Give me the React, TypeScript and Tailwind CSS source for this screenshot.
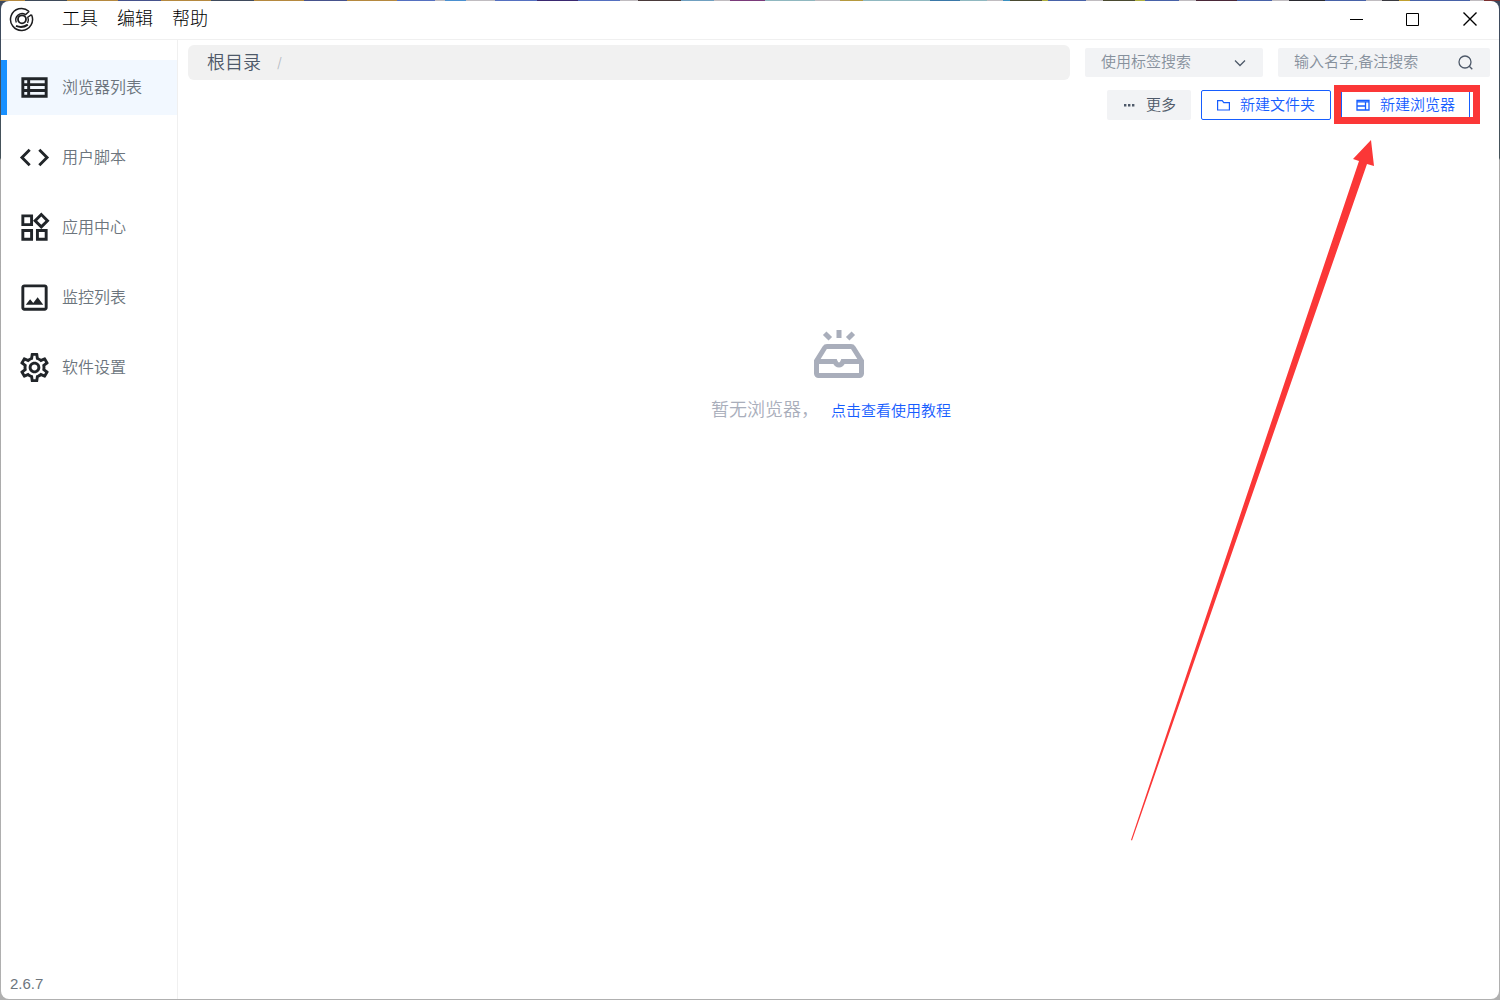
import React from "react";

type NavItem = { label: string; path: string };

const navItems: NavItem[] = [
  {
    label: "浏览器列表",
    path: "M3 5v14h18V5H3zm4 2v2H5V7h2zm-2 6v-2h2v2H5zm0 2h2v2H5v-2zm14 2H9v-2h10v2zm0-4H9v-2h10v2zm0-4H9V7h10v2z",
  },
  {
    label: "用户脚本",
    path: "M9.4 16.6L4.8 12l4.6-4.6L8 6l-6 6 6 6 1.4-1.4zm5.2 0l4.6-4.6-4.6-4.6L16 6l6 6-6 6-1.4-1.4z",
  },
  {
    label: "应用中心",
    path: "M16.66 4.52l2.83 2.83-2.83 2.83-2.83-2.83 2.83-2.83M9 5v4H5V5h4m10 10v4h-4v-4h4M9 15v4H5v-4h4m7.66-13.31L11 7.34 16.66 13l5.66-5.66-5.66-5.65zM11 3H3v8h8V3zm10 10h-8v8h8v-8zm-10 0H3v8h8v-8z",
  },
  {
    label: "监控列表",
    path: "M19 5v14H5V5h14m0-2H5c-1.1 0-2 .9-2 2v14c0 1.1.9 2 2 2h14c1.1 0 2-.9 2-2V5c0-1.1-.9-2-2-2zm-4.86 8.86l-3 3.87L9 13.14 6 17h12l-3.86-5.14z",
  },
  {
    label: "软件设置",
    path: "M19.43 12.98c.04-.32.07-.64.07-.98 0-.34-.03-.66-.07-.98l2.11-1.65c.19-.15.24-.42.12-.64l-2-3.46a.5.5 0 00-.61-.22l-2.49 1c-.52-.4-1.08-.73-1.69-.98l-.38-2.65A.488.488 0 0014 2h-4c-.25 0-.46.18-.49.42l-.38 2.65c-.61.25-1.17.59-1.69.98l-2.49-1a.566.566 0 00-.18-.03c-.17 0-.34.09-.43.25l-2 3.46c-.13.22-.07.49.12.64l2.11 1.65c-.04.32-.07.65-.07.98 0 .33.03.66.07.98l-2.11 1.65c-.19.15-.24.42-.12.64l2 3.46a.5.5 0 00.61.22l2.49-1c.52.4 1.08.73 1.69.98l.38 2.65c.03.24.24.42.49.42h4c.25 0 .46-.18.49-.42l.38-2.65c.61-.25 1.17-.59 1.69-.98l2.49 1c.06.02.12.03.18.03.17 0 .34-.09.43-.25l2-3.46c.12-.22.07-.49-.12-.64l-2.11-1.65zm-1.98-1.71c.04.31.05.52.05.73 0 .21-.02.43-.05.73l-.14 1.13.89.7 1.08.84-.7 1.21-1.27-.51-1.04-.42-.9.68c-.43.32-.84.56-1.25.73l-1.06.43-.16 1.13-.2 1.35h-1.4l-.19-1.35-.16-1.13-1.06-.43c-.43-.18-.83-.41-1.23-.71l-.91-.7-1.06.43-1.27.51-.7-1.21 1.08-.84.89-.7-.14-1.13c-.03-.31-.05-.54-.05-.74s.02-.43.05-.73l.14-1.13-.89-.7-1.08-.84.7-1.21 1.27.51 1.04.42.9-.68c.43-.32.84-.56 1.25-.73l1.06-.43.16-1.13.2-1.35h1.39l.19 1.35.16 1.13 1.06.43c.43.18.83.41 1.23.71l.91.7 1.06-.43 1.27-.51.7 1.21-1.07.85-.89.7.14 1.13zM12 8c-2.21 0-4 1.79-4 4s1.79 4 4 4 4-1.79 4-4-1.79-4-4-4zm0 6c-1.1 0-2-.9-2-2s.9-2 2-2 2 .9 2 2-.9 2-2 2z",
  },
];

// Desktop wallpaper showing above the window: [share of the width, colour]
const desktopStrip: [number, string][] = [
  [25, "#b5893f"], [42, "#3e4a5a"], [51, "#b5893f"], [43, "#46528c"], [50, "#b5893f"],
  [43, "#3f4a5c"], [50, "#b5893f"], [43, "#46528c"], [50, "#b5893f"], [38, "#5570c0"],
  [10, "#c0bcc0"], [21, "#4a90d0"], [29, "#c0bcc0"], [42, "#5570c0"], [41, "#3a2870"],
  [42, "#5570c0"], [18, "#c0bcc0"], [43, "#4a3a3a"], [33, "#70a0c0"], [16, "#c0bcc0"],
  [35, "#7a3a7a"], [50, "#90b8c0"], [25, "#c0bcc0"], [23, "#b5993f"], [67, "#90b8c0"],
  [30, "#3a78a8"], [27, "#90b8c0"], [16, "#c0bcc0"], [7, "#3a90c0"], [32, "#4a4a30"],
  [6, "#b0b040"], [38, "#4862a8"], [17, "#c0bcc0"], [32, "#4a4a30"], [10, "#b0b040"],
  [34, "#4862a8"], [17, "#c0bcc0"], [41, "#4a2838"], [35, "#4862a8"], [17, "#c0bcc0"],
  [36, "#2a2a30"], [41, "#4862a8"], [16, "#c0bcc0"], [17, "#3a3a40"], [11, "#c0a030"],
  [60, "#4862a8"], [14, "#c0bcc0"], [16, "#7a3030"],
];

function DesktopStrip() {
  return (
    <div className="flex h-px shrink-0">
      {desktopStrip.map(([share, color], i) => (
        <span key={i} className="basis-0" style={{ flexGrow: share, backgroundColor: color }} />
      ))}
    </div>
  );
}

function Logo() {
  return (
    <svg className="size-[25px]" viewBox="0 0 25 25" fill="none" stroke="#1d1d1f" strokeWidth="1.5" aria-hidden="true">
      <path d="M19.800 4.200A11 11 0 1 0 22.500 7.800" />
      <circle cx="13" cy="12.300" r="4" strokeWidth="1.800" />
      <path d="M20.300 4.200L16.600 7.600A6.400 6.400 0 0 0 7.300 15.500" strokeWidth="1.400" />
      <path d="M22.500 7.600L18.800 10.200A6.600 6.600 0 0 1 18.600 16" strokeWidth="1.400" />
      <path d="M7 18.900C11 20.500 15.500 20 18.800 17.600" strokeWidth="2" />
    </svg>
  );
}

function TitleBar() {
  return (
    <header className="flex h-[39px] shrink-0 items-center border-b border-[#f0f0f0] pb-0.5 pl-2">
      <Logo />
      <nav className="ml-7 flex gap-[19px]">
        {["工具", "编辑", "帮助"].map((t) => (
          <button key={t} type="button" className="text-lg leading-7 font-light text-black">
            {t}
          </button>
        ))}
      </nav>
      <div className="ml-auto flex items-center">
        <button type="button" aria-label="最小化" className="flex h-9 w-14 items-center justify-center">
          <svg width="13" height="13" aria-hidden="true"><path d="M0 6.500h13" stroke="#000" /></svg>
        </button>
        <button type="button" aria-label="最大化" className="flex h-9 w-14 items-center justify-center">
          <svg width="13" height="13" fill="none" aria-hidden="true"><path d="M.5.5h12v12H.5z" stroke="#000" /></svg>
        </button>
        <button type="button" aria-label="关闭" className="flex h-9 w-[59px] items-center justify-center">
          <svg width="14" height="14" aria-hidden="true"><path d="M.5.5l13 13M13.500.5l-13 13" stroke="#000" strokeWidth="1.400" /></svg>
        </button>
      </div>
    </header>
  );
}

function Sidebar() {
  return (
    <aside className="flex w-[177px] shrink-0 flex-col border-r border-[#f0f0f0] pt-5">
      <nav className="flex flex-col gap-[15px]">
        {navItems.map((item, i) => (
          <button
            key={item.label}
            type="button"
            className={
              "flex h-[55px] items-center gap-[10px] border-l-6 pl-[10px] text-base font-[350] text-[#6c757d] " +
              (i === 0 ? "border-[#1890ff] bg-[#f2f8ff]" : "border-transparent")
            }
          >
            <svg className="size-[35px]" viewBox="0 0 24 24" fill="#212529" aria-hidden="true">
              <path d={item.path} />
            </svg>
            <span className="pb-0.5">{item.label}</span>
          </button>
        ))}
      </nav>
      <p className="mt-auto pb-1 pl-[9px] font-['Liberation_Sans',sans-serif] text-[15px] leading-[22px] text-[#6c757d]">2.6.7</p>
    </aside>
  );
}

function Filters() {
  return (
    <div className="flex items-center gap-[15px]">
      <div className="flex h-[35px] min-w-0 flex-1 items-center gap-4 rounded-md bg-[#f1f1f1] pl-[19px] text-lg font-[350] text-[#4e5969]">
        <span>根目录</span>
        <span className="text-sm text-[#b4b9c2]">/</span>
      </div>
      <div className="relative w-[178px]">
        <select
          aria-label="使用标签搜索"
          className="h-[29px] w-full appearance-none rounded-xs bg-[#f2f3f5] px-4 text-[15px] font-[350] text-[#86909c]"
        >
          <option>使用标签搜索</option>
        </select>
        <svg className="pointer-events-none absolute top-[9px] right-[17px] size-3" viewBox="0 0 12 12" fill="none" stroke="#4e5969" strokeWidth="1.300" aria-hidden="true">
          <path d="M1 3.500l5 5 5-5" />
        </svg>
      </div>
      <label className="flex h-[29px] w-[212px] items-center rounded-xs bg-[#f2f3f5] pr-[17px] pl-4">
        <input
          type="text"
          aria-label="搜索"
          placeholder="输入名字,备注搜索"
          className="min-w-0 flex-1 bg-transparent text-[15px] font-[350] outline-none placeholder:text-[#86909c]"
        />
        <svg className="size-[15px]" viewBox="0 0 15 15" fill="none" stroke="#4e5969" strokeWidth="1.300" aria-hidden="true">
          <circle cx="7" cy="7" r="6" />
          <path d="M11.300 11.300l3 3" />
        </svg>
      </label>
    </div>
  );
}

function Annotation() {
  return (
    <>
      <span className="pointer-events-none absolute -top-[5px] -left-[7px] h-[39px] w-[146px] border-7 border-[#fb3737]" />
      <svg className="pointer-events-none absolute top-[50px] right-[95px] h-[701px] w-[244px]" viewBox="0 0 244 701" fill="#fb3737" aria-hidden="true">
        <path d="M240 0L243 26L236 24L1 700.500L0 700L228 21L222 19Z" />
      </svg>
    </>
  );
}

function Actions() {
  return (
    <div className="mt-[10px] flex justify-end gap-[10px] pr-5 text-[15px] font-[350]">
      <button type="button" className="flex h-[30px] w-[84px] items-center gap-[11px] rounded-xs bg-[#f2f3f5] pl-4 text-[#4e5969]">
        <svg width="12" height="12" fill="#4e5969" aria-hidden="true">
          <path d="M1 5h2.400v2.400H1zM5 5h2.400v2.400H5zM9 5h2.400v2.400H9z" />
        </svg>
        更多
      </button>
      <button type="button" className="flex h-[30px] w-[130px] items-center gap-[10px] rounded-xs border border-[#165dff] pl-[14px] text-[#165dff]">
        <svg width="14" height="14" viewBox="0 0 14 14" fill="none" stroke="currentColor" strokeWidth="1.200" aria-hidden="true">
          <path d="M1.600 2.600h4.600l1.600 2h5.600v7.400H1.600z" />
        </svg>
        新建文件夹
      </button>
      <div className="relative">
        <button type="button" className="flex h-[30px] w-[129px] items-center gap-[10px] rounded-xs border border-[#165dff] pl-[14px] text-[#165dff]">
          <svg width="14" height="14" viewBox="0 0 14 14" fill="none" stroke="currentColor" strokeWidth="1.300" aria-hidden="true">
            <path d="M1 2.500h12v9.500H1z" />
            <path d="M1 3.800h12M1 8h8.500M9.500 4.500V12" />
          </svg>
          新建浏览器
        </button>
        <Annotation />
      </div>
    </div>
  );
}

function EmptyState() {
  return (
    <section className="mt-[210px] flex flex-col items-center">
      <svg width="50" height="48" viewBox="0 0 50 48" fill="none" stroke="#a9aebb" strokeWidth="5" aria-hidden="true">
        <path d="M25 0v8M10.700 3.200l5.600 5.600M39.300 3.200l-5.600 5.600" />
        <path d="M13 16.500h24c1 0 1.800.5 2.300 1.300L47.500 31v12.500a2 2 0 0 1-2 2h-41a2 2 0 0 1-2-2V31l8.200-13.200c.5-.8 1.300-1.300 2.300-1.300z" />
        <path d="M2.500 31.500h18.500c.8 2 2.200 3.500 4 3.500s3.200-1.500 4-3.500h18.500" />
      </svg>
      <p className="mt-[17px] flex items-center gap-3 pr-4 text-lg leading-7 font-[350] text-[#a9aebb]">
        <span>暂无浏览器，</span>
        <a href="#tutorial" className="pt-0.5 text-[15px] text-[#165dff]">点击查看使用教程</a>
      </p>
    </section>
  );
}

export default function App() {
  return (
    <div className="flex min-h-screen flex-col bg-[linear-gradient(to_bottom,#3d4a5e_0px,#46535a_158px,#a9a9a9_160px,#b0b0b0_100%)] font-['Inter','Noto_Sans_CJK_SC',sans-serif]">
      <DesktopStrip />
      <div className="mx-px mb-px flex flex-1 flex-col overflow-hidden rounded-lg bg-white">
        <TitleBar />
        <div className="flex flex-1">
          <Sidebar />
          <main className="min-w-0 flex-1 pt-[5px] pr-[9px] pl-[10px]">
            <Filters />
            <Actions />
            <EmptyState />
          </main>
        </div>
      </div>
    </div>
  );
}
